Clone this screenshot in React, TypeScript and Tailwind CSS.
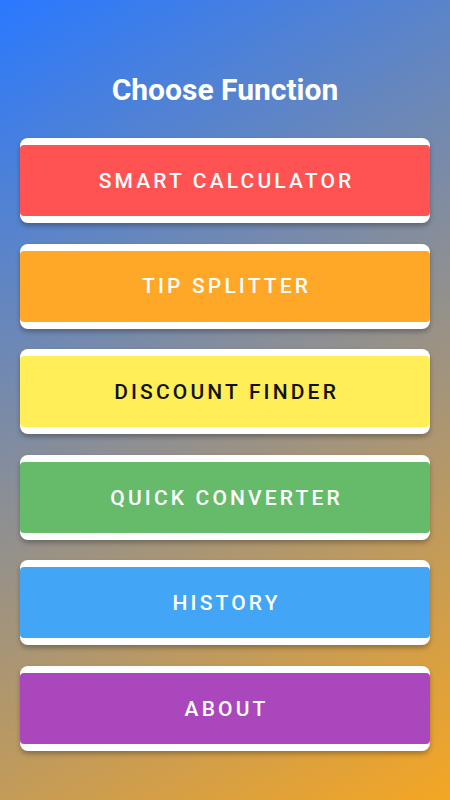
import React from "react";

const functions = [
  { label: "Smart Calculator", bg: "bg-[#ff5252]", text: "text-white" },
  { label: "Tip Splitter", bg: "bg-[#ffa726]", text: "text-white" },
  { label: "Discount Finder", bg: "bg-[#ffee58]", text: "text-[#111111]" },
  { label: "Quick Converter", bg: "bg-[#66bb6a]", text: "text-white" },
  { label: "History", bg: "bg-[#42a5f5]", text: "text-white" },
  { label: "About", bg: "bg-[#ab47bc]", text: "text-white" },
];

export default function App() {
  return (
    <div
      className="w-[450px] h-[800px] overflow-hidden bg-[linear-gradient(150.6deg,#2979ff,#f5a623)] px-5 pt-[73px] flex flex-col"
      style={{ fontFamily: "Roboto, 'Liberation Sans', sans-serif" }}
    >
      <h1 className="text-center text-white font-bold text-[30px] leading-[34px]">
        Choose Function
      </h1>

      <div className="mt-[31px] flex flex-col gap-[20.6px]">
        {functions.map((f) => (
          <FunctionButton key={f.label} {...f} />
        ))}
      </div>
    </div>
  );
}

function FunctionButton({ label, bg, text }: { label: string; bg: string; text: string }) {
  return (
    <button className="h-[85px] w-full rounded-[8px] bg-white py-[7px] shadow-[0_3px_5px_rgba(0,0,0,0.28)]">
      <div
        className={`h-full w-full rounded-[4px] ${bg} ${text} flex items-center justify-center text-[21px] font-medium uppercase tracking-[0.15em]`}
      >
        <span className="pl-[0.15em] pt-[2px]">{label}</span>
      </div>
    </button>
  );
}
